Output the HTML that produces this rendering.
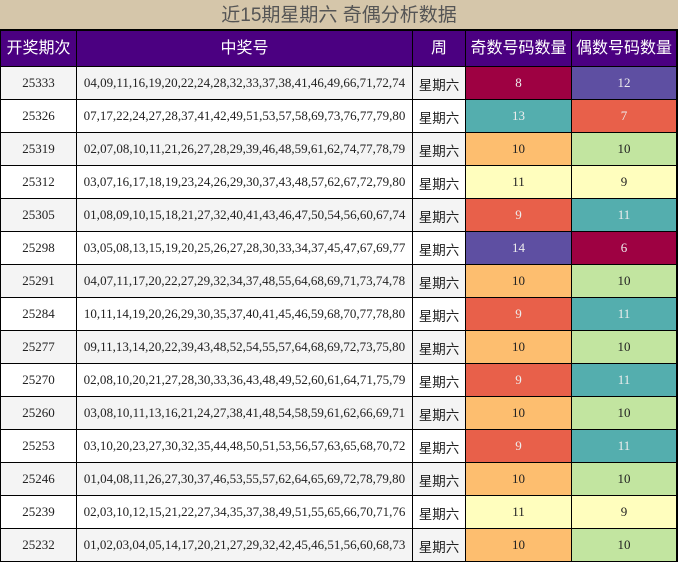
<!DOCTYPE html><html><head><meta charset="utf-8"><style>
body{margin:0;width:678px;height:562px;background:#000;position:relative;overflow:hidden;font-family:"Liberation Serif","Noto Serif CJK SC",serif}
.t{position:absolute;left:0;top:0;width:678px;height:29px;background:#d5c6aa;color:#555;font:19px "Liberation Sans","Noto Sans CJK SC",sans-serif;text-align:center;line-height:31px}
.c{position:absolute;box-sizing:border-box;text-align:center;font-size:13px;color:#222;white-space:nowrap;overflow:hidden}
.h{background:#4b0081;color:#fff;font:16px "Liberation Sans","Noto Sans CJK SC",sans-serif;line-height:35px}
.w{font:13.5px "Liberation Sans","Noto Sans CJK SC",sans-serif;padding-top:3px}
</style></head><body>
<div class="t">近15期星期六 奇偶分析数据</div>
<div id="g"></div>
<script>
var X=[1,77,413,466,572,677];
var H=["开奖期次","中奖号","周","奇数号码数量","偶数号码数量"];
var g=document.getElementById('g'),s='';
function cell(i,y,h,cls,txt,bg,col){s+='<div class="c '+cls+'" style="left:'+X[i]+'px;top:'+y+'px;width:'+(X[i+1]-X[i]-1)+'px;height:'+h+'px;line-height:'+h+'px;'+(bg?'background:'+bg+';':'')+(col?'color:'+col+';':'')+'">'+txt+'</div>';}
for(var i=0;i<5;i++)cell(i,31,35,'h',H[i]);
var D=[["25333","04,09,11,16,19,20,22,24,28,32,33,37,38,41,46,49,66,71,72,74",8,12],
["25326","07,17,22,24,27,28,37,41,42,49,51,53,57,58,69,73,76,77,79,80",13,7],
["25319","02,07,08,10,11,21,26,27,28,29,39,46,48,59,61,62,74,77,78,79",10,10],
["25312","03,07,16,17,18,19,23,24,26,29,30,37,43,48,57,62,67,72,79,80",11,9],
["25305","01,08,09,10,15,18,21,27,32,40,41,43,46,47,50,54,56,60,67,74",9,11],
["25298","03,05,08,13,15,19,20,25,26,27,28,30,33,34,37,45,47,67,69,77",14,6],
["25291","04,07,11,17,20,22,27,29,32,34,37,48,55,64,68,69,71,73,74,78",10,10],
["25284","10,11,14,19,20,26,29,30,35,37,40,41,45,46,59,68,70,77,78,80",9,11],
["25277","09,11,13,14,20,22,39,43,48,52,54,55,57,64,68,69,72,73,75,80",10,10],
["25270","02,08,10,20,21,27,28,30,33,36,43,48,49,52,60,61,64,71,75,79",9,11],
["25260","03,08,10,11,13,16,21,24,27,38,41,48,54,58,59,61,62,66,69,71",10,10],
["25253","03,10,20,23,27,30,32,35,44,48,50,51,53,56,57,63,65,68,70,72",9,11],
["25246","01,04,08,11,26,27,30,37,46,53,55,57,62,64,65,69,72,78,79,80",10,10],
["25239","02,03,10,12,15,21,22,27,34,35,37,38,49,51,55,65,66,70,71,76",11,9],
["25232","01,02,03,04,05,14,17,20,21,27,29,32,42,45,46,51,56,60,68,73",10,10]];
var C={6:'#9e0142',7:'#e8604a',8:'#9e0142',9:'#e8604a',10:'#fdbe6f',11:'#fffebe',12:'#5e4fa2',13:'#54aeae',14:'#5e4fa2'};
var CE={9:'#fffebe',10:'#c2e5a0',11:'#54aeae',12:'#5e4fa2',7:'#e8604a',6:'#9e0142'};
var L={6:1,7:1,8:1,9:1,12:1,13:1,14:1};
var LE={6:1,7:1,11:1,12:1};
for(var r=0;r<15;r++){var y=67+33*r,h=32,bg=r%2==0?'#f4f4f4':'#fff',d=D[r];
cell(0,y,h,'',d[0],bg);cell(1,y,h,'',d[1],bg);cell(2,y,h,'w','星期六',bg);
cell(3,y,h,'',d[2],C[d[2]],L[d[2]]?'#eee':'#222');cell(4,y,h,'',d[3],CE[d[3]],LE[d[3]]?'#eee':'#222');}
g.innerHTML=s;
</script>
</body></html>
